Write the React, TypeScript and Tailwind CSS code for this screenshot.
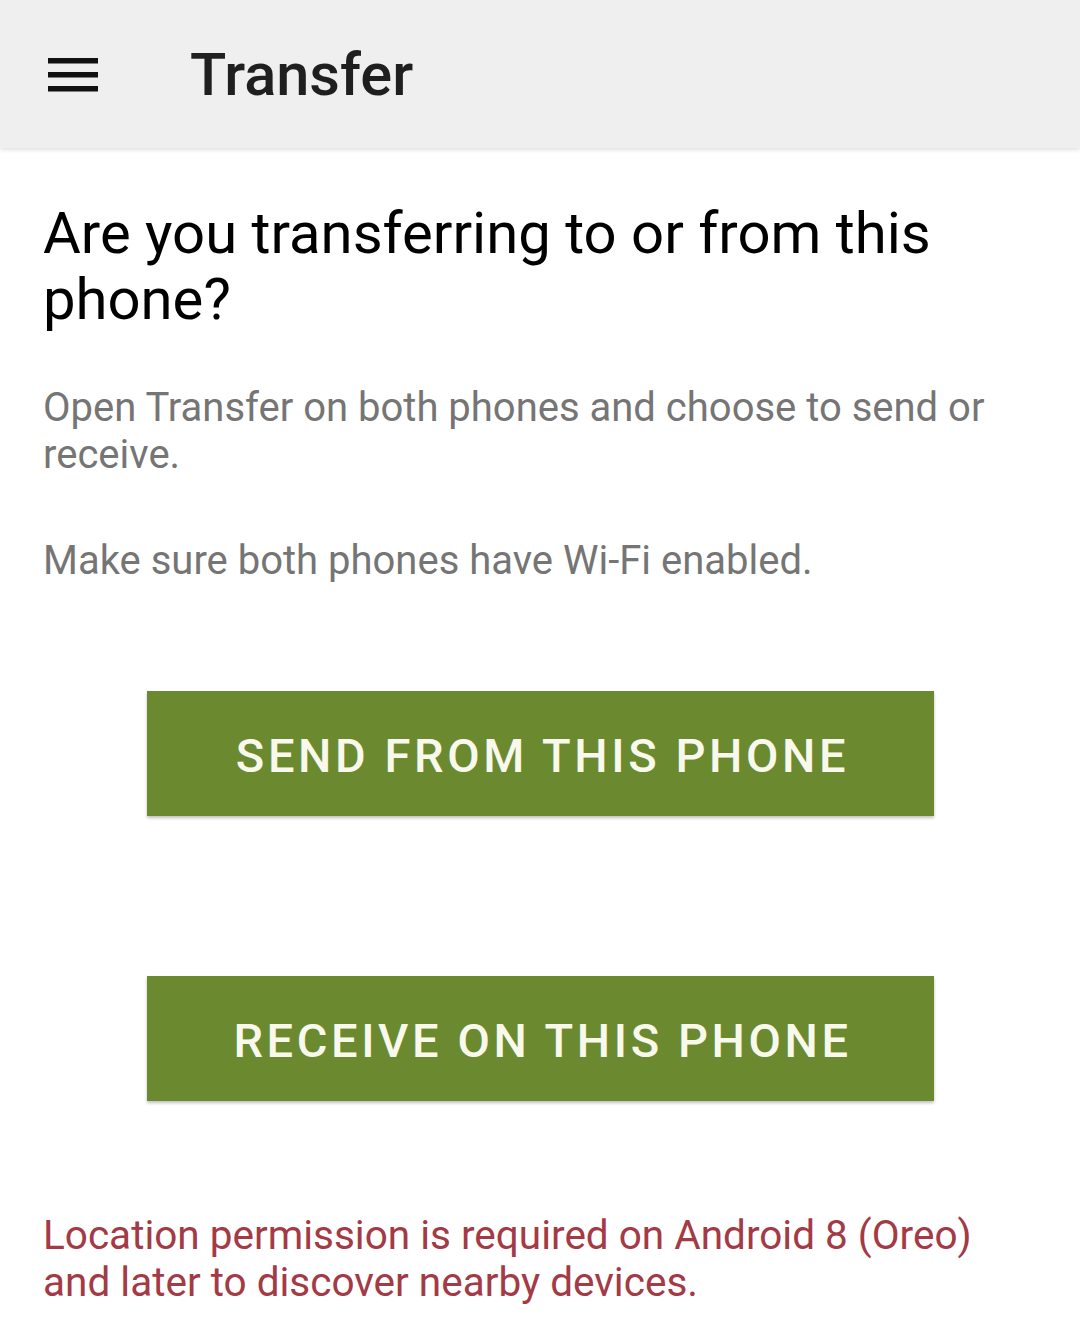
export default function App() {
  return (
    <div className="w-[1080px] h-[1344px] bg-white overflow-hidden font-['Roboto',sans-serif]">
      {/* App bar */}
      <div className="h-[148px] bg-[#efefef] flex items-center shadow-[0_2px_4px_rgba(0,0,0,0.12)] relative">
        <div className="w-[190px] pl-[48px] flex items-center">
          <svg width="50" height="36" viewBox="0 0 50 36">
            <rect x="0" y="2" width="50" height="5.5" fill="#111" />
            <rect x="0" y="16" width="50" height="5.5" fill="#111" />
            <rect x="0" y="30" width="50" height="5.5" fill="#111" />
          </svg>
        </div>
        <span className="text-[59.5px] font-medium text-[#1f1f1f] leading-none pt-[4px]">Transfer</span>
      </div>

      <div className="px-[43px] pt-[52px]">
        <h1 className="text-[58px] leading-[66px] text-black">
          Are you transferring to or from this phone?
        </h1>
        <p className="mt-[52px] text-[40px] leading-[47px] text-[#757575]">
          Open Transfer on both phones and choose to send or receive.
        </p>
        <p className="mt-[59px] text-[40px] leading-[47px] text-[#757575]">
          Make sure both phones have Wi-Fi enabled.
        </p>

        <div className="flex flex-col items-center mt-[107px]">
          <button className="w-[787px] h-[125px] pl-[5px] pt-[6px] bg-[#6b8a2f] text-[#f8f8ec] text-[47px] font-medium tracking-[3.6px] shadow-[0_2px_3px_rgba(0,0,0,0.25)]">
            SEND FROM THIS PHONE
          </button>
          <button className="mt-[160px] w-[787px] h-[125px] pl-[5px] pt-[6px] bg-[#6b8a2f] text-[#f8f8ec] text-[47px] font-medium tracking-[3.6px] shadow-[0_2px_3px_rgba(0,0,0,0.25)]">
            RECEIVE ON THIS PHONE
          </button>
        </div>

        <p className="mt-[111px] max-w-[980px] text-[40.5px] leading-[47px] text-[#a33a45]">
          Location permission is required on Android 8 (Oreo) and later to discover nearby devices.
        </p>
      </div>
    </div>
  );
}
